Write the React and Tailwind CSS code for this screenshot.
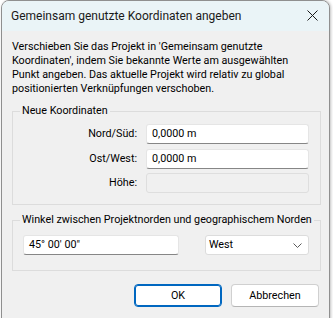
export default function App() {
  const font = { fontFamily: 'Roboto, "Segoe UI", sans-serif' };
  return (
    <div className="w-[333px] h-[318px] bg-white overflow-hidden" style={font}>
      <div className="ml-[1px] w-[329px] h-[320px] rounded-t-[8px] border border-[#8f8f8f] overflow-hidden bg-[#f0f0f0] shadow-[1px_0_3px_rgba(0,0,0,0.25)] text-[10.75px] text-black">
        <div className="h-[30px] bg-[#eaf4f7] flex items-center justify-between pl-[9px] pr-[11px]">
          <span className="text-[12px] text-[#1a1a1a] leading-[16px] whitespace-nowrap">Gemeinsam genutzte Koordinaten angeben</span>
          <svg width="11" height="11" viewBox="0 0 11 11" className="mt-[-2px]">
            <path d="M0.5 0.5 L10.5 10.5 M10.5 0.5 L0.5 10.5" stroke="#1a1a1a" strokeWidth="1" fill="none" />
          </svg>
        </div>
        <div className="px-[10px]">
          <p className="mt-[9px] leading-[14px] whitespace-nowrap">
            Verschieben Sie das Projekt in 'Gemeinsam genutzte<br />
            Koordinaten', indem Sie bekannte Werte am ausgewählten<br />
            Punkt angeben. Das aktuelle Projekt wird relativ zu global<br />
            positionierten Verknüpfungen verschoben.
          </p>
          <fieldset className="mt-[7px] w-[309px] border border-[#dcdcdc] pb-[11px]">
            <legend className="ml-[7px] px-[2px] leading-[16px] whitespace-nowrap">Neue Koordinaten</legend>
            <div className="flex items-center mt-[5px]">
              <span className="w-[124px] text-right leading-[16px]">Nord/Süd:</span>
              <div className="ml-[9px] w-[163px] h-[20px] bg-white border border-[#e5e5e5] border-b-[#868686] rounded-[3px] flex items-center pl-[5px] leading-[16px]">0,0000 m</div>
            </div>
            <div className="flex items-center mt-[5px]">
              <span className="w-[124px] text-right leading-[16px]">Ost/West:</span>
              <div className="ml-[9px] w-[163px] h-[20px] bg-white border border-[#e5e5e5] border-b-[#868686] rounded-[3px] flex items-center pl-[5px] leading-[16px]">0,0000 m</div>
            </div>
            <div className="flex items-center mt-[4px]">
              <span className="w-[124px] text-right leading-[16px]">Höhe:</span>
              <div className="ml-[9px] w-[163px] h-[20px] bg-[#f0f0f0] border border-[#dedede] rounded-[3px]"></div>
            </div>
          </fieldset>
          <fieldset className="mt-[7px] w-[309px] border border-[#dcdcdc] pb-[15px]">
            <legend className="ml-[7px] px-[2px] leading-[16px] whitespace-nowrap">Winkel zwischen Projektnorden und geographischem Norden</legend>
            <div className="flex items-center mt-[7px] pl-[10px]">
              <div className="w-[156px] h-[20px] bg-white border border-[#e5e5e5] border-b-[#868686] rounded-[3px] flex items-center pl-[5px] leading-[16px]">45° 00' 00"</div>
              <div className="ml-[26px] w-[104px] h-[20px] bg-white border border-[#dcdcdc] rounded-[3px] flex items-center justify-between pl-[3px] pr-[6px] leading-[16px]">
                <span>West</span>
                <svg width="9" height="5" viewBox="0 0 9 5">
                  <path d="M0.5 0.5 L4.5 4.5 L8.5 0.5" stroke="#5a5a5a" strokeWidth="1" fill="none" />
                </svg>
              </div>
            </div>
          </fieldset>
          <div className="flex justify-end mt-[13px] gap-[9px]">
            <button className="w-[88px] h-[23px] bg-white border border-[#0067c0] shadow-[inset_0_0_0_1px_#0067c0] rounded-[4px] leading-[16px]">OK</button>
            <button className="w-[88px] h-[23px] bg-white border border-[#d0d0d0] border-b-[#b5b5b5] rounded-[4px] leading-[16px]">Abbrechen</button>
          </div>
        </div>
      </div>
    </div>
  );
}
